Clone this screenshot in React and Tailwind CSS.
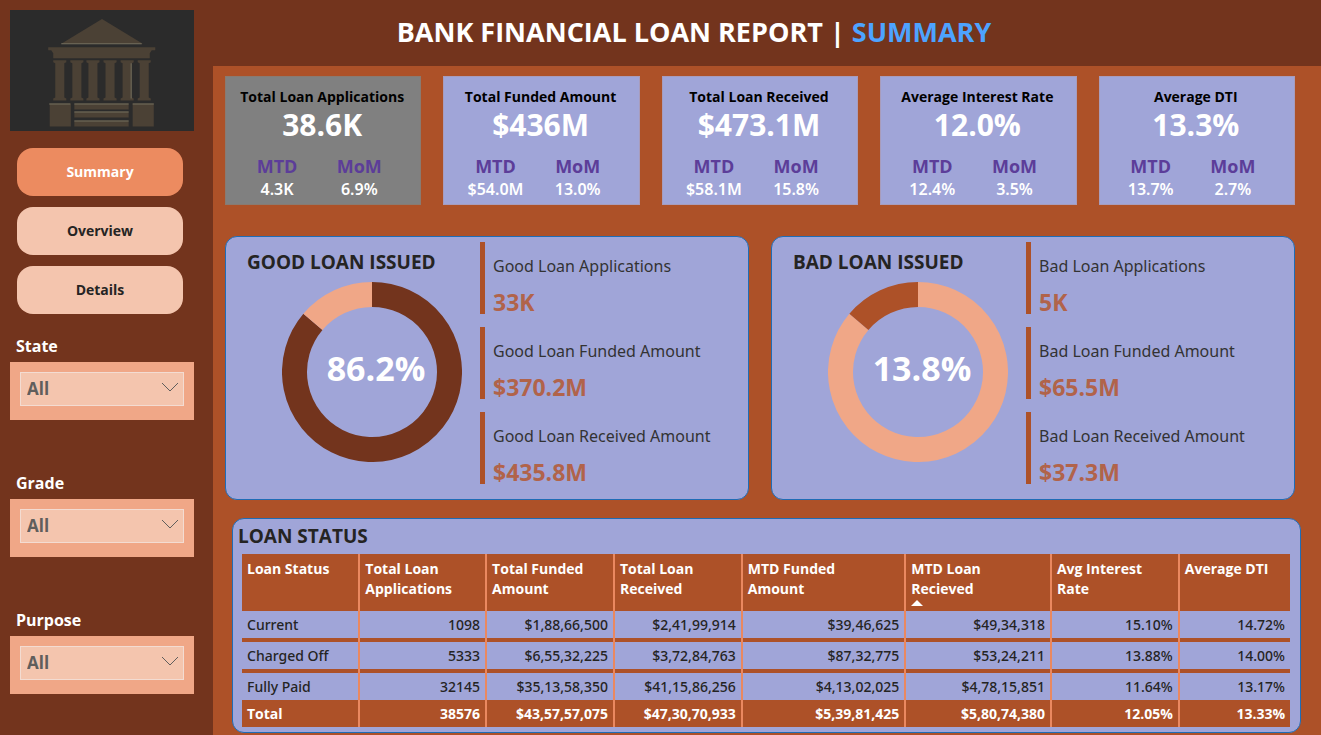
const nav = ["Summary", "Overview", "Details"];

const filters = ["State", "Grade", "Purpose"];

const kpis = [
  { title: "Total Loan Applications", value: "38.6K", mtd: "4.3K", mom: "6.9%", active: true },
  { title: "Total Funded Amount", value: "$436M", mtd: "$54.0M", mom: "13.0%" },
  { title: "Total Loan Received", value: "$473.1M", mtd: "$58.1M", mom: "15.8%" },
  { title: "Average Interest Rate", value: "12.0%", mtd: "12.4%", mom: "3.5%" },
  { title: "Average DTI", value: "13.3%", mtd: "13.7%", mom: "2.7%" },
];

const panels = [
  {
    title: "GOOD LOAN ISSUED",
    value: "86.2%",
    main: "#73341d",
    rest: "#f0a787",
    stats: [
      ["Good Loan Applications", "33K"],
      ["Good Loan Funded Amount", "$370.2M"],
      ["Good Loan Received Amount", "$435.8M"],
    ],
  },
  {
    title: "BAD LOAN ISSUED",
    value: "13.8%",
    main: "#f0a787",
    rest: "#ad5128",
    stats: [
      ["Bad Loan Applications", "5K"],
      ["Bad Loan Funded Amount", "$65.5M"],
      ["Bad Loan Received Amount", "$37.3M"],
    ],
  },
];

const columns = [
  ["Loan Status", "w-[11.1%]"],
  ["Total Loan Applications", "w-[12.1%]"],
  ["Total Funded Amount", "w-[12.2%]"],
  ["Total Loan Received", "w-[12.2%]"],
  ["MTD Funded Amount", "w-[15.6%]"],
  ["MTD Loan Recieved", "w-[13.9%]"],
  ["Avg Interest Rate", "w-[12.2%]"],
  ["Average DTI", "w-[10.7%]"],
];

const rows = [
  ["Current", "1098", "$1,88,66,500", "$2,41,99,914", "$39,46,625", "$49,34,318", "15.10%", "14.72%"],
  ["Charged Off", "5333", "$6,55,32,225", "$3,72,84,763", "$87,32,775", "$53,24,211", "13.88%", "14.00%"],
  ["Fully Paid", "32145", "$35,13,58,350", "$41,15,86,256", "$4,13,02,025", "$4,78,15,851", "11.64%", "13.17%"],
];

const totals = ["Total", "38576", "$43,57,57,075", "$47,30,70,933", "$5,39,81,425", "$5,80,74,380", "12.05%", "13.33%"];

function BankLogo() {
  const pillars = [55, 72, 88, 105, 122, 139];
  return (
    <svg viewBox="0 0 183 120" className="block w-full bg-[#2b2b2b]" role="img" aria-label="Bank">
      <g fill="#4b4135">
        <path d="M91.500 9 L132 33.500 H51 Z" />
        <path d="M38 37 H144.500 V40 H141 L139 43 V48 H43 V43 L41 40 H38 Z" />
        {pillars.map((x) => (
          <path
            key={x}
            d={`M${x - 12} 50 h13 v2 l-2 1 v34 l2 1 v2 h-13 v-2 l2 -1 v-34 l-2 -1 z`}
          />
        ))}
        <path d="M39.500 93 h21 v23 h-21 z M122 93 h21 v23 h-21 z" />
        <path d="M64 93 h54 v6 h-54 z M64 101 h54 v6 h-54 z M64 110 h54 v6 h-54 z" />
      </g>
      <g stroke="#75705f" strokeWidth="1" fill="none">
        <path d="M51 33.500 H131 M39 93.500 H60 M64 93.500 H118 M122 93.500 H143 M64 101.500 H118 M64 110.500 H118" />
        <path d="M120.500 53 V88" />
      </g>
    </svg>
  );
}

function Donut({ value, main, rest }) {
  const share = 0.862;
  const angle = share * 2 * Math.PI;
  const r = 77.5;
  const x = 90 + r * Math.sin(angle);
  const y = 90 - r * Math.cos(angle);
  return (
    <div className="relative size-[180px]">
      <svg viewBox="0 0 180 180" className="size-full" fill="none" strokeWidth="25" aria-hidden="true">
        <path d={`M90 12.5 A${r} ${r} 0 1 1 ${x} ${y}`} stroke={main} />
        <path d={`M${x} ${y} A${r} ${r} 0 0 1 90 12.5`} stroke={rest} />
      </svg>
      <div className="absolute inset-0 flex items-center justify-center pb-2 pl-2 text-[34px] font-bold text-white">
        {value}
      </div>
    </div>
  );
}

function Filter({ label }) {
  const id = `filter-${label.toLowerCase()}`;
  return (
    <div>
      <label htmlFor={id} className="block pb-1 pl-[6px] text-base leading-6 font-bold text-white">
        {label}
      </label>
      <div className="bg-[#f0a787] px-[10px] pt-[10px] pb-[14px]">
        <div className="relative">
          <select
            id={id}
            className="block h-[34px] w-full appearance-none border border-[#f3dcd2] bg-[#f4c5ae] pl-[6px] text-[17px] font-bold text-[#605e5c]"
          >
            <option>All</option>
          </select>
          <svg
            viewBox="0 0 18 10"
            className="pointer-events-none absolute top-[10px] right-[5px] h-[10px] w-[18px]"
            fill="none"
            stroke="#605e5c"
            aria-hidden="true"
          >
            <path d="M1 1 L9 9 L17 1" />
          </svg>
        </div>
      </div>
    </div>
  );
}

function Kpi({ title, value, mtd, mom, active }) {
  return (
    <article
      className={`flex h-[129px] flex-col border pt-[10px] pr-[20px] pl-[10px] text-center ${
        active ? "border-[#8a7a70] bg-[#808080]" : "border-[#a89cbb] bg-[#a0a5d8]"
      }`}
    >
      <h2 className="-mr-2 text-sm leading-5 font-bold whitespace-nowrap text-black">{title}</h2>
      <p className="-mr-2 text-[30px] leading-9 font-bold text-white">{value}</p>
      <dl className="mt-[11px] grid grid-cols-2">
        <div>
          <dt className="text-lg leading-6 font-bold text-[#5c3d99]">MTD</dt>
          <dd className="font-['Noto_Sans',sans-serif] text-base leading-[22px] font-semibold text-white">{mtd}</dd>
        </div>
        <div>
          <dt className="text-lg leading-6 font-bold text-[#5c3d99]">MoM</dt>
          <dd className="font-['Noto_Sans',sans-serif] text-base leading-[22px] font-semibold text-white">{mom}</dd>
        </div>
      </dl>
    </article>
  );
}

function LoanPanel({ title, value, main, rest, stats }) {
  return (
    <section className="flex h-[264px] rounded-xl border border-[#1f6cb5] bg-[#a0a5d8]">
      <div className="flex w-[254px] flex-col pt-[13px]">
        <h2 className="pl-[21px] text-[19px] leading-6 font-bold whitespace-nowrap text-[#252423]">{title}</h2>
        <div className="mt-2 pl-14">
          <Donut value={value} main={main} rest={rest} />
        </div>
      </div>
      <dl className="flex flex-1 flex-col gap-[13px] pt-[5px]">
        {stats.map(([name, amount]) => (
          <div key={name} className="h-[72px] border-l-[5px] border-[#ad5128] pt-3 pl-2">
            <dt className="font-['Noto_Sans',sans-serif] text-base leading-6 whitespace-nowrap text-[#333]">{name}</dt>
            <dd className="mt-[10px] text-[23px] leading-7 font-bold text-[#b1634a]">{amount}</dd>
          </div>
        ))}
      </dl>
    </section>
  );
}

const divider = "border-[#ea8860] [&:not(:first-child)]:border-l-2";

export default function App() {
  return (
    <div className="flex min-h-screen bg-[#73341d] font-['Open_Sans','Noto_Sans',sans-serif]">
      <aside className="w-[213px] shrink-0 pt-[10px] pr-[19px] pl-[10px]">
        <BankLogo />
        <nav className="mt-[17px] flex flex-col gap-[11px] pr-[11px] pl-[7px]">
          {nav.map((name, i) => (
            <button
              key={name}
              type="button"
              className={`h-12 rounded-2xl text-sm font-bold ${
                i === 0 ? "bg-[#ec8b60] text-white" : "bg-[#f4c5ae] text-[#252423]"
              }`}
            >
              {name}
            </button>
          ))}
        </nav>
        <div className="mt-5 flex flex-col gap-[51px]">
          {filters.map((label) => (
            <Filter key={label} label={label} />
          ))}
        </div>
      </aside>

      <div className="flex min-w-0 flex-1 flex-col">
        <header className="flex h-[66px] items-center justify-center pr-[146px] pb-[2px]">
          <h1 className="text-[27px] font-bold whitespace-nowrap text-white">
            BANK FINANCIAL LOAN REPORT | <span className="text-[#4da3ff]">SUMMARY</span>
          </h1>
        </header>

        <main className="flex-1 bg-[#ad5128] pt-[10px] pr-[26px] pl-3">
          <div className="grid grid-cols-5 gap-[22px]">
            {kpis.map((kpi) => (
              <Kpi key={kpi.title} {...kpi} />
            ))}
          </div>

          <div className="mt-[31px] grid grid-cols-2 gap-[22px]">
            {panels.map((panel) => (
              <LoanPanel key={panel.title} {...panel} />
            ))}
          </div>

          <section className="mt-[18px] -mr-[6px] ml-[7px] h-[215px] rounded-xl border border-[#1f6cb5] bg-[#a0a5d8] pr-[10px] pl-[9px]">
            <h2 className="-ml-1 pt-[5px] pb-[6px] text-[19px] leading-6 font-bold text-[#252423]">LOAN STATUS</h2>
            <table className="w-full table-fixed border-separate border-spacing-0 text-sm">
              <thead>
                <tr className="h-[57px] bg-[#ad5128] text-left text-white">
                  {columns.map(([name, width]) => (
                    <th
                      key={name}
                      scope="col"
                      className={`${width} ${divider} relative py-[5px] pr-3 pl-[5px] align-top leading-5 font-bold`}
                    >
                      {name}
                      {name === "MTD Loan Recieved" && (
                        <svg
                          viewBox="0 0 12 6"
                          className="absolute bottom-[5px] left-[5px] h-[6px] w-3"
                          fill="white"
                          aria-hidden="true"
                        >
                          <path d="M6 0 L12 6 H0 Z" />
                        </svg>
                      )}
                    </th>
                  ))}
                </tr>
              </thead>
              <tbody className="font-['Noto_Sans',sans-serif]">
                {rows.map((row, r) => (
                  <tr key={row[0]} className={r < 2 ? "h-[31px]" : "h-[27px]"}>
                    {row.map((cell, i) => (
                      <td
                        key={i}
                        className={`${divider} px-[5px] leading-5 font-medium text-[#252423] ${
                          i === 0 ? "text-left" : "text-right"
                        } ${r < 2 ? "pb-[3px] shadow-[inset_0_-4px_0_#ad5128]" : ""}`}
                      >
                        {cell}
                      </td>
                    ))}
                  </tr>
                ))}
              </tbody>
              <tfoot>
                <tr className="h-[27px] bg-[#ad5128] text-white">
                  {totals.map((cell, i) => (
                    <td
                      key={i}
                      className={`${divider} px-[5px] leading-5 font-bold ${i === 0 ? "text-left" : "text-right"}`}
                    >
                      {cell}
                    </td>
                  ))}
                </tr>
              </tfoot>
            </table>
          </section>
        </main>
      </div>
    </div>
  );
}
